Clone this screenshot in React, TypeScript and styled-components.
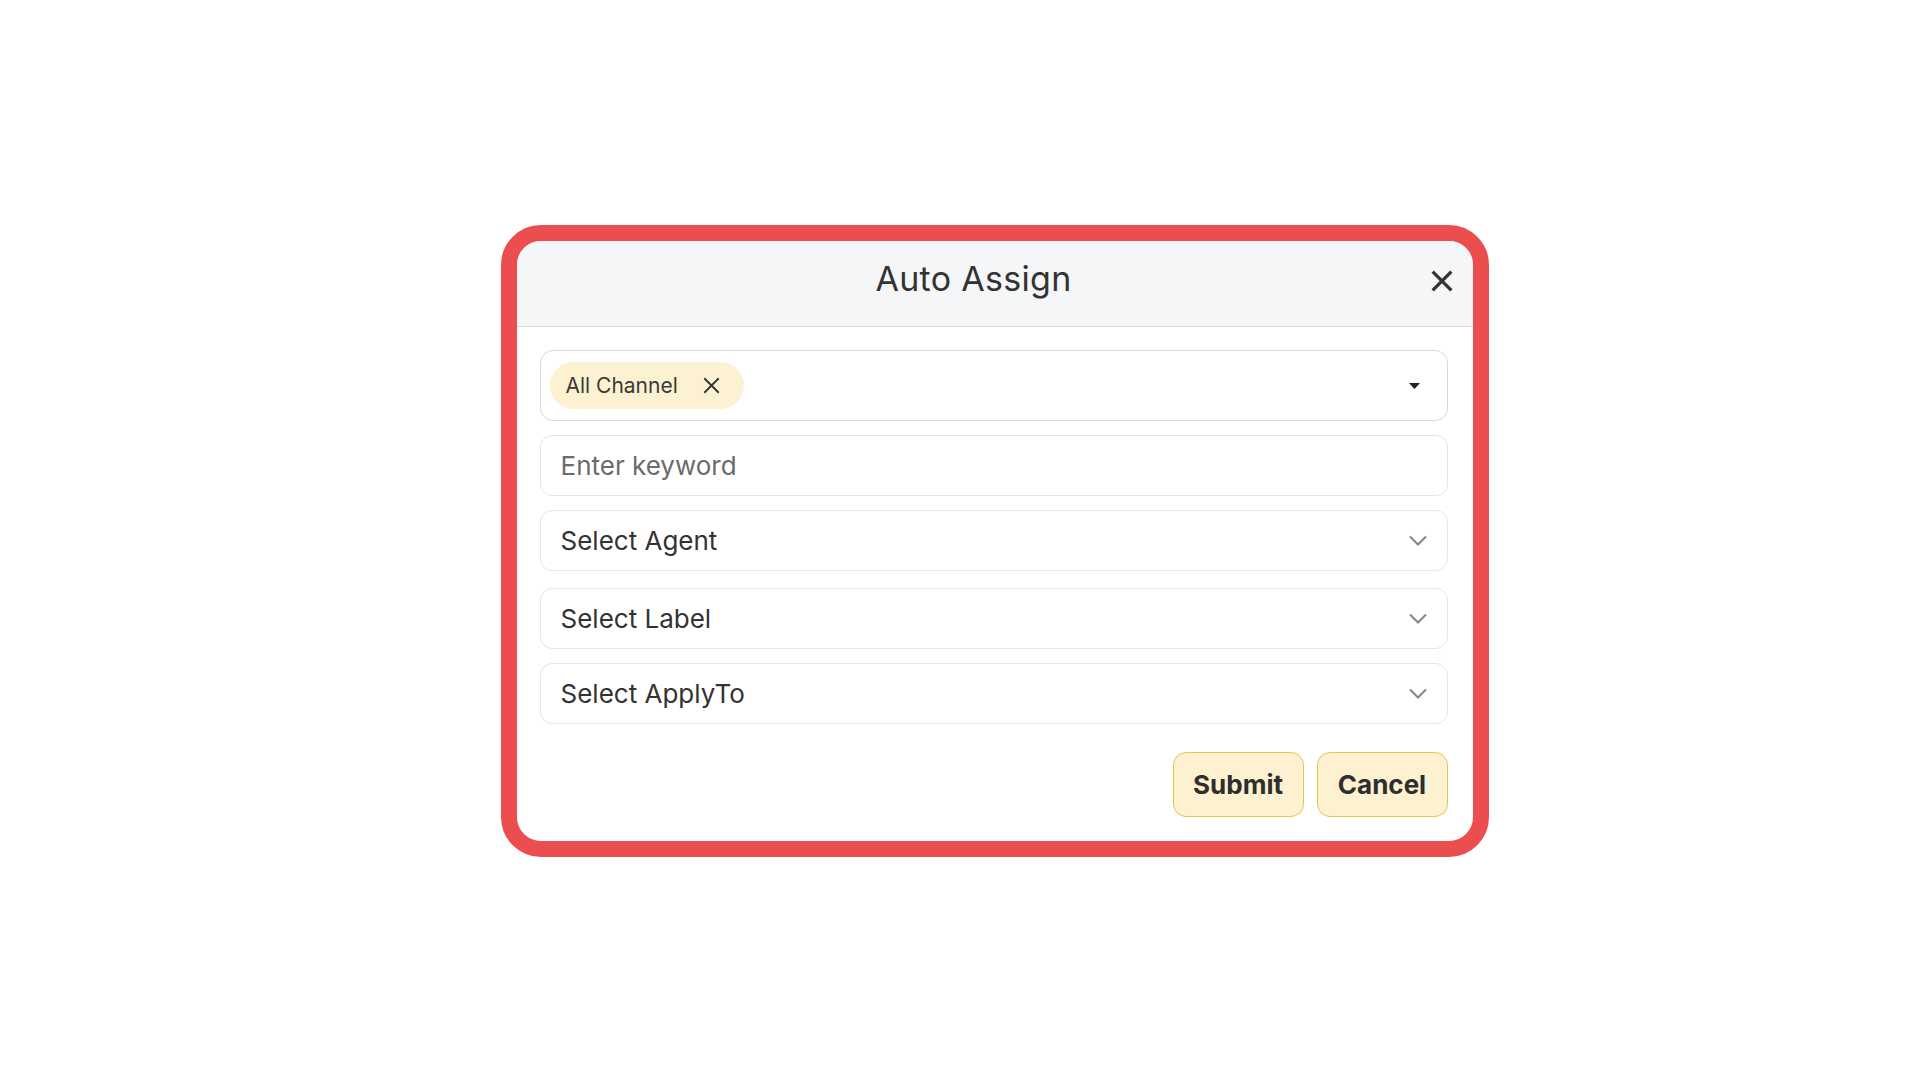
import React from 'react'
import styled, { createGlobalStyle } from 'styled-components'

const GlobalStyle = createGlobalStyle`
    html, body {
        margin: 0;
        padding: 0;
        background: #ffffff;
        font-family: Inter, 'Noto Sans', Arial, sans-serif;
    }
    * {
        box-sizing: border-box;
    }
`

const CloseIcon = ({ size, stroke }: { size: number; stroke: number }) => (
    <svg width={size} height={size} viewBox='0 0 20 20' fill='none'>
        <path d='M1.5 1.5L18.5 18.5M18.5 1.5L1.5 18.5' stroke='currentColor' strokeWidth={stroke} />
    </svg>
)

const Caret = () => (
    <svg width='11' height='6' viewBox='0 0 11 6'>
        <path d='M0 0H11L5.5 6Z' fill='#222' />
    </svg>
)

const Chevron = () => (
    <svg width='18' height='11' viewBox='0 0 18 11' fill='none'>
        <path d='M1 1.5L9 9.5L17 1.5' stroke='#858585' strokeWidth='2' />
    </svg>
)

const SELECTS = ['Select Agent', 'Select Label', 'Select ApplyTo']

export default function App() {
    const [channels, setChannels] = React.useState(['All Channel'])
    const [keyword, setKeyword] = React.useState('')

    return (
        <Page>
            <GlobalStyle />
            <Frame>
                <Header>
                    <Title>Auto Assign</Title>
                    <CloseButton type='button' aria-label='Close'>
                        <CloseIcon size={22} stroke={3} />
                    </CloseButton>
                </Header>
                <Body>
                    <MultiSelect>
                        {channels.map((c) => (
                            <Chip key={c}>
                                {c}
                                <ChipRemove
                                    type='button'
                                    onClick={() => setChannels(channels.filter((x) => x !== c))}
                                >
                                    <CloseIcon size={17} stroke={2.2} />
                                </ChipRemove>
                            </Chip>
                        ))}
                        <Spacer />
                        <Caret />
                    </MultiSelect>
                    <KeywordInput
                        placeholder='Enter keyword'
                        value={keyword}
                        onChange={(e) => setKeyword(e.target.value)}
                    />
                    {SELECTS.map((s, i) => (
                        <SelectBox key={s} $gap={i === 1 ? 17 : 14}>
                            <span>{s}</span>
                            <Chevron />
                        </SelectBox>
                    ))}
                    <Actions>
                        <ActionButton type='button'>Submit</ActionButton>
                        <ActionButton type='button'>Cancel</ActionButton>
                    </Actions>
                </Body>
            </Frame>
        </Page>
    )
}

const Page = styled.div`
    display: flex;
    justify-content: center;
    padding: 225px 0 0 69px;
`

const Frame = styled.div`
    width: 988px;
    border: 16px solid #ec4e4f;
    border-radius: 40px;
    background: #ffffff;
    overflow: hidden;
    display: flex;
    flex-direction: column;
`

const Header = styled.div`
    height: 86px;
    display: flex;
    align-items: center;
    padding: 0 20px 0 0;
    background: #f5f6f7;
    border-bottom: 1px solid #dcdcdc;
`

const Title = styled.h2`
    flex: 1;
    margin: 0;
    text-align: center;
    font-size: 34px;
    font-weight: 400;
    color: #333333;
    letter-spacing: 0.3px;
    padding-bottom: 10px;
`

const CloseButton = styled.button`
    width: 22px;
    height: 22px;
    padding: 0;
    border: none;
    background: none;
    color: #333333;
    cursor: pointer;
    display: flex;
    margin-bottom: 6px;
`

const Body = styled.div`
    display: flex;
    flex-direction: column;
    padding: 23px 25px 24px 23px;
`

const MultiSelect = styled.div`
    height: 71px;
    display: flex;
    align-items: center;
    padding: 0 27px 0 9px;
    border: 1px solid #dcd8d8;
    border-radius: 13px;
`

const Chip = styled.div`
    height: 47px;
    display: flex;
    align-items: center;
    gap: 25px;
    padding: 0 24px 0 16px;
    border-radius: 24px;
    background: #fcf1d1;
    font-size: 21px;
    color: #3a3a3a;
`

const ChipRemove = styled.button`
    display: flex;
    padding: 0;
    border: none;
    background: none;
    color: #333333;
    cursor: pointer;
`

const Spacer = styled.div`
    flex: 1;
`

const KeywordInput = styled.input`
    margin-top: 14px;
    height: 61px;
    padding: 0 20px;
    border: 1px solid #e4e4e6;
    border-radius: 12px;
    font-family: inherit;
    font-size: 26px;
    color: #333333;
    outline: none;
    &::placeholder {
        color: #6b6b6b;
    }
`

const SelectBox = styled.div<{ $gap: number }>`
    margin-top: ${(p) => p.$gap}px;
    height: 61px;
    display: flex;
    align-items: center;
    justify-content: space-between;
    padding: 0 20px 0 20px;
    border: 1px solid #e6e6e6;
    border-radius: 12px;
    font-size: 26px;
    color: #333333;
    cursor: pointer;
`

const Actions = styled.div`
    display: flex;
    justify-content: flex-end;
    gap: 13px;
    margin-top: 28px;
`

const ActionButton = styled.button`
    width: 131px;
    height: 65px;
    border: 1px solid #e6c54e;
    border-radius: 13px;
    background: #fdf1d0;
    font-family: inherit;
    font-size: 26px;
    font-weight: 700;
    color: #2e2e2e;
    cursor: pointer;
`
